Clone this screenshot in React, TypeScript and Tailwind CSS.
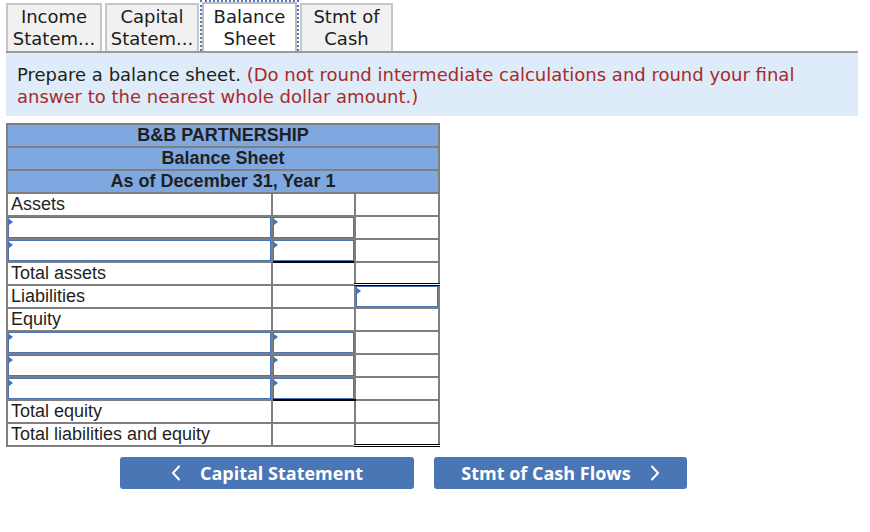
import React from 'react';

type RowKind = 'label' | 'input';

interface SheetRow {
  kind: RowKind;
  label?: string;
  col2?: 'input' | 'blank';
  col3?: 'input' | 'blank';
  // extra rules drawn on the bottom edge of a cell
  rule2?: 'single';
  rule3?: 'single' | 'double';
}

const rows: SheetRow[] = [
  { kind: 'label', label: 'Assets' },
  { kind: 'input', col2: 'input' },
  { kind: 'input', col2: 'input', rule2: 'single' },
  { kind: 'label', label: 'Total assets', rule3: 'double' },
  { kind: 'label', label: 'Liabilities', col3: 'input' },
  { kind: 'label', label: 'Equity' },
  { kind: 'input', col2: 'input' },
  { kind: 'input', col2: 'input' },
  { kind: 'input', col2: 'input', rule2: 'single' },
  { kind: 'label', label: 'Total equity', rule3: 'single' },
  { kind: 'label', label: 'Total liabilities and equity', rule3: 'double' },
];

const InputBox = () => (
  <div className="relative h-[21px] border border-[#4a74b6] bg-white">
    <span className="absolute left-0 top-[1px] h-0 w-0 border-y-[3px] border-l-[4px] border-y-transparent border-l-[#3f72c6]" />
  </div>
);

const ruleClass = (rule?: 'single' | 'double') => {
  if (rule === 'single') return 'border-b-2 border-b-black';
  if (rule === 'double') return 'border-b-[3px] border-double border-b-black';
  return '';
};

const Tab = ({ top, bottom, width }: { top: string; bottom: string; width: string }) => (
  <div
    className={`${width} h-[48px] border-2 border-b-0 border-[#c6c6c6] bg-[#f1f1f1] flex flex-col items-center justify-center leading-[22px] text-[18px] text-[#1c1c1c]`}
  >
    <span>{top}</span>
    <span>{bottom}</span>
  </div>
);

const Chevron = ({ dir }: { dir: 'left' | 'right' }) => (
  <svg width="10" height="16" viewBox="0 0 10 16" fill="none" stroke="white" strokeWidth="2" strokeLinecap="round" strokeLinejoin="round">
    {dir === 'left' ? <polyline points="8,1.5 2,8 8,14.5" /> : <polyline points="2,1.5 8,8 2,14.5" />}
  </svg>
);

export default function App() {
  return (
    <div className="w-[870px] h-[532px] bg-white pl-[6px] font-['DejaVu_Sans',Verdana,sans-serif]">
      {/* Tabs */}
      <div className="w-[852px] h-[53px] flex items-end border-b-2 border-[#9b9b9b]">
        <Tab top="Income" bottom="Statem..." width="w-[96px]" />
        <div className="ml-[3px]">
          <Tab top="Capital" bottom="Statem..." width="w-[94px]" />
        </div>
        <div className="ml-[1px] w-[99px] h-[51px] border-2 border-b-0 border-dotted border-[#4a78c4]">
          <div className="h-full border-2 border-b-0 border-[#bdbdbd] bg-white flex flex-col items-center justify-center leading-[22px] text-[18px] text-[#1c1c1c]">
            <span>Balance</span>
            <span>Sheet</span>
          </div>
        </div>
        <div className="ml-[1px]">
          <Tab top="Stmt of" bottom="Cash" width="w-[93px]" />
        </div>
      </div>

      {/* Instructions */}
      <div className="w-[852px] h-[63px] bg-[#deebf8] px-[11px] pt-[11px] text-[18px] leading-[22px] text-[#1f1f1f]">
        Prepare a balance sheet.{' '}
        <span className="text-[#a82a2a]">
          (Do not round intermediate calculations and round your final answer to the nearest whole dollar amount.)
        </span>
      </div>

      {/* Balance sheet */}
      <table className="mt-[7px] w-[434px] table-fixed border-collapse border-2 border-[#7f7f7f] font-['Liberation_Sans',Arial,sans-serif] text-[18px] text-[#1f1f1f]">
        <colgroup>
          <col className="w-[265px]" />
          <col className="w-[83px]" />
          <col className="w-[84px]" />
        </colgroup>
        <tbody>
          {['B&B PARTNERSHIP', 'Balance Sheet', 'As of December 31, Year 1'].map((h) => (
            <tr key={h}>
              <td colSpan={3} className="p-0 border-2 border-[#7f7f7f] bg-[#7fa8e0] text-center font-bold">
                <div className="h-[21px] leading-[21px]">{h}</div>
              </td>
            </tr>
          ))}
          {rows.map((r, i) => {
            const h = r.rule3 === 'double' ? 'h-[20px] leading-[20px]' : 'h-[21px] leading-[21px]';
            return (
              <tr key={i}>
                <td className="p-0 border-2 border-[#7f7f7f] bg-white">
                  {r.kind === 'input' ? <InputBox /> : <div className={`${h} px-[3px]`}>{r.label}</div>}
                </td>
                <td className={`p-0 border-2 border-[#7f7f7f] bg-white ${ruleClass(r.rule2)}`}>
                  {r.col2 === 'input' ? <InputBox /> : <div className={h} />}
                </td>
                <td className={`p-0 border-2 border-[#7f7f7f] bg-white ${ruleClass(r.rule3)}`}>
                  {r.col3 === 'input' ? <InputBox /> : <div className={h} />}
                </td>
              </tr>
            );
          })}
        </tbody>
      </table>

      {/* Navigation */}
      <div className="mt-[10px] flex gap-[20px] pl-[114px] font-['Open_Sans',Arial,sans-serif] text-[18px] font-bold text-white">
        <button className="w-[294px] h-[32px] rounded-[3px] bg-[#4a76b5] flex items-center justify-center gap-[19px]">
          <Chevron dir="left" />
          <span>Capital Statement</span>
        </button>
        <button className="w-[253px] h-[32px] rounded-[3px] bg-[#4a76b5] flex items-center justify-center gap-[19px]">
          <span>Stmt of Cash Flows</span>
          <Chevron dir="right" />
        </button>
      </div>
    </div>
  );
}
